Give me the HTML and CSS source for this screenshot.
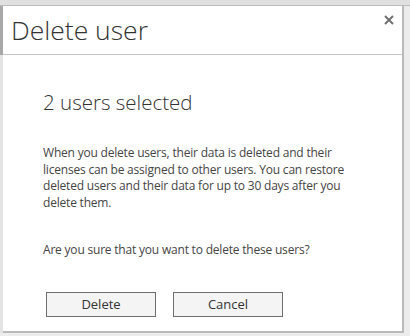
FILE: index.html
```html
<!DOCTYPE html>
<html lang="en">
<head>
    <meta charset="UTF-8">
    <title>Delete user</title>
    <link rel="stylesheet" href="styles.css">
</head>
<body>
    <div class="top-bar"></div>
    <div class="frame">
        <div class="side"></div>
        <div class="dialog">
            <!-- header -->
            <div class="header">
                <h1 class="title">Delete user</h1>
                <button class="close" title="Close">
                    <svg width="10" height="10" viewBox="0 0 10 10">
                        <path d="M1 1 L9 9 M9 1 L1 9" stroke="#707070" stroke-width="2" fill="none"/>
                    </svg>
                </button>
            </div>

            <!-- body -->
            <div class="content">
                <h2 class="subtitle">2 users selected</h2>
                <p class="text">When you delete users, their data is deleted and their licenses can be assigned to other users. You can restore deleted users and their data for up to 30 days after you delete them.</p>
                <p class="text question">Are you sure that you want to delete these users?</p>
                <div class="actions">
                    <button class="button">Delete</button>
                    <button class="button">Cancel</button>
                </div>
            </div>
        </div>
    </div>
</body>
</html>
```

FILE: styles.css
```css
/* page */
body {
    margin: 0;
    background-color: #ececec;
    font-family: "Open Sans", "Noto Sans", sans-serif;
    color: #333;
}

.top-bar {
    height: 5px;
    background-color: #e0e0e0;
    border-bottom: 1px solid #bcbcbc;
}

.frame {
    display: flex;
}

.side {
    width: 3px;
    background: linear-gradient(#a8a8a8 0, #a8a8a8 49px, #e4e4e4 49px);
}

/* dialog box */
.dialog {
    width: 399px;
    height: 325px;
    background-color: #fff;
    border-right: 2px solid #bababa;
    border-bottom: 2px solid #bababa;
}

.header {
    height: 48px;
    border-bottom: 1px solid #c6c6c6;
    display: flex;
    justify-content: space-between;
    align-items: flex-start;
    padding-left: 8px;
}

.title {
    margin: 9px 0 0;
    font-size: 26.5px;
    font-weight: 300;
    line-height: 30px;
    color: #333;
}

.close {
    border: none;
    background: none;
    padding: 0;
    margin: 9px 8px 0 0;
    width: 10px;
    height: 10px;
    cursor: pointer;
}

.close svg {
    display: block;
}

.content {
    padding: 34px 0 0 40px;
}

.subtitle {
    margin: 0;
    font-size: 20.5px;
    font-weight: 300;
    line-height: 26px;
    color: #333;
}

.text {
    margin: 30px 0 0;
    width: 306px;
    font-size: 12px;
    letter-spacing: -0.2px;
    line-height: 16.7px;
    color: #444;
}

.question {
    margin-top: 30px;
}

.actions {
    display: flex;
    gap: 17px;
    margin: 33px 0 0 3px;
}

.button {
    width: 110px;
    height: 25px;
    padding: 0;
    background-color: #f4f4f4;
    border: 1px solid #6e6e6e;
    font-family: inherit;
    font-size: 13px;
    color: #333;
    cursor: pointer;
}

.button:hover {
    background-color: #e8e8e8;
}
```
